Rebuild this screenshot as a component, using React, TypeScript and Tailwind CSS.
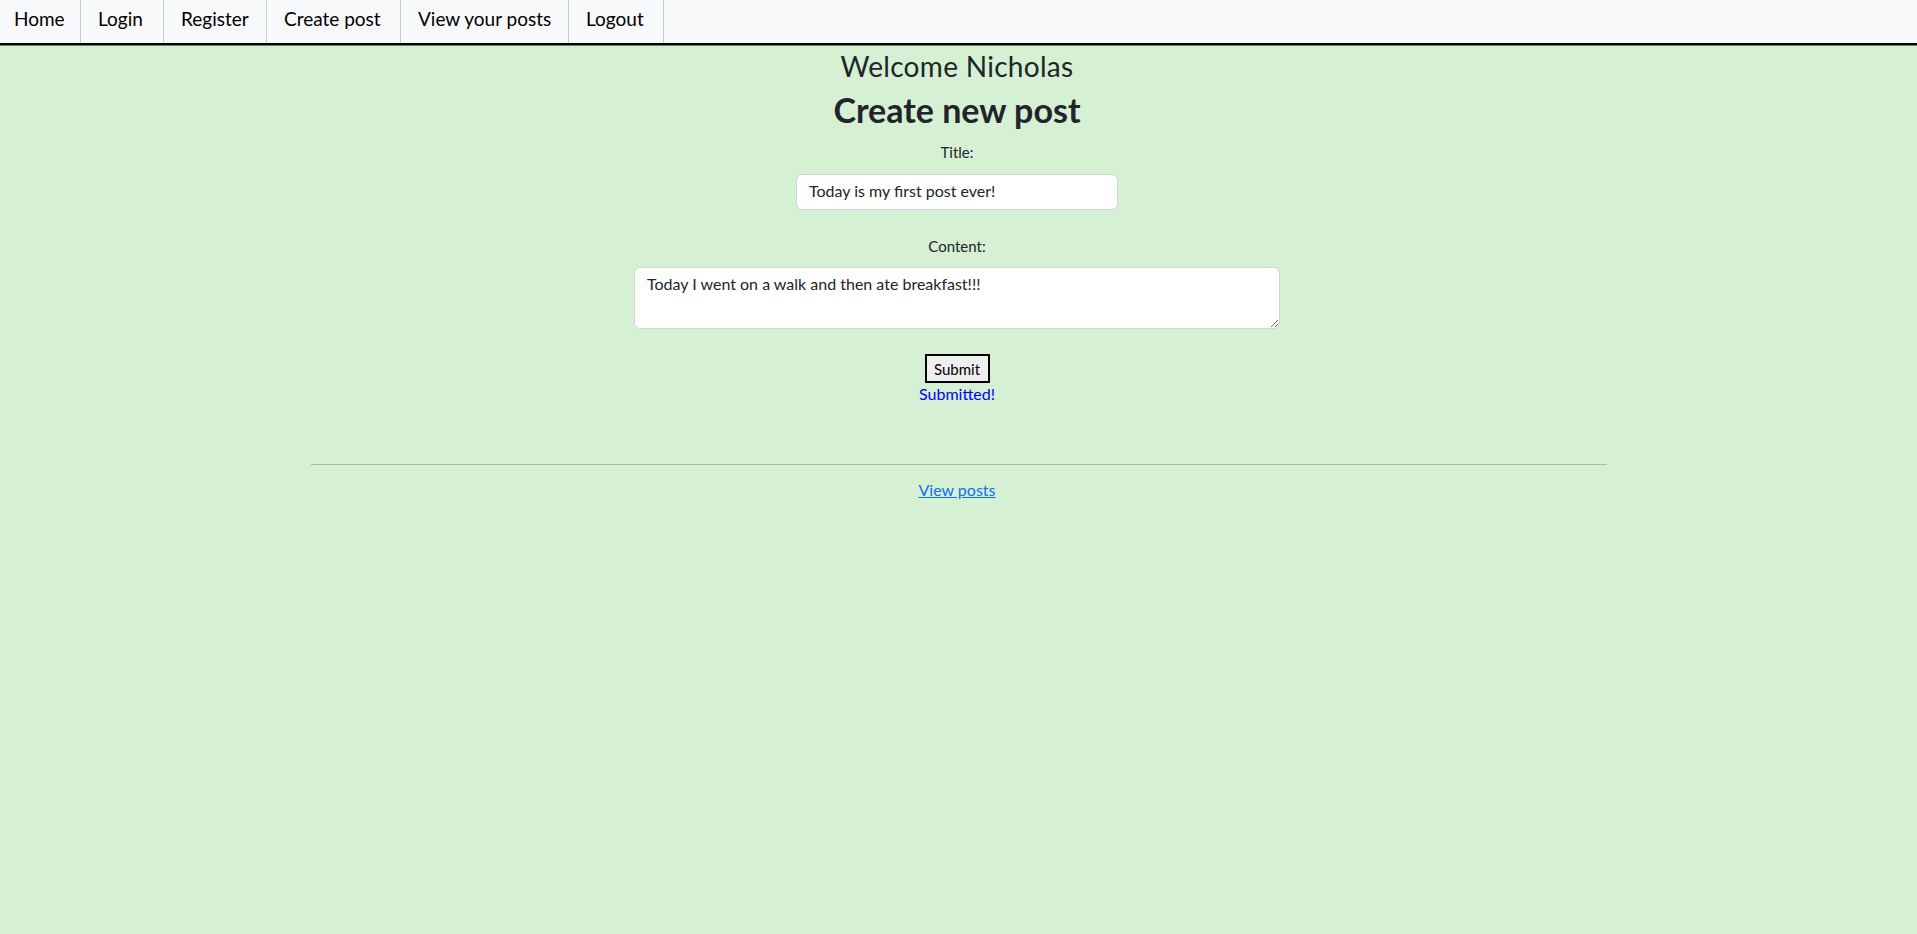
import React from "react";

const navItems: { label: string; w: string; pl: string }[] = [
  { label: "Home", w: "w-[81px]", pl: "pl-[14px]" },
  { label: "Login", w: "w-[83px]", pl: "pl-[17px]" },
  { label: "Register", w: "w-[103px]", pl: "pl-[17px]" },
  { label: "Create post", w: "w-[134px]", pl: "pl-[17px]" },
  { label: "View your posts", w: "w-[168px]", pl: "pl-[17px]" },
  { label: "Logout", w: "w-[95px]", pl: "pl-[17px]" },
];

export default function App() {
  return (
    <div
      className="min-h-[934px] w-full bg-[#d5f0d2] text-[#212529]"
      style={{ fontFamily: "Lato, 'Noto Sans', sans-serif" }}
    >
      <nav className="flex h-[45px] w-full border-b-2 border-black bg-[#f8f9fa] shadow-[0_1px_0_#6f806c]">
        {navItems.map((item) => (
          <a
            key={item.label}
            href="#"
            className={`${item.w} ${item.pl} block h-full border-r border-[#b9dab0] pt-[7px] text-[19px] leading-[23px] text-black no-underline`}
          >
            {item.label}
          </a>
        ))}
      </nav>

      <main className="flex flex-col items-center pr-[3px]">
        <h3 className="mt-[5px] text-[28px] leading-[32px] font-normal tracking-[0.3px]">Welcome Nicholas</h3>
        <h2 className="mt-[8px] text-[34px] leading-[40px] font-bold">Create new post</h2>

        <label className="mt-[12px] text-[15px] leading-[20px]">Title:</label>
        <input
          type="text"
          defaultValue="Today is my first post ever!"
          className="mt-[12px] box-border h-[36px] w-[322px] rounded-[6px] border border-[#ced4da] bg-white px-[12px] pb-[3px] text-[16px] text-[#212529] outline-none"
          style={{ fontFamily: "Lato, sans-serif" }}
        />

        <label className="mt-[26px] text-[15px] leading-[20px]">Content:</label>
        <textarea
          defaultValue="Today I went on a walk and then ate breakfast!!!"
          className="mt-[11px] box-border h-[62px] w-[646px] rounded-[6px] border border-[#ced4da] bg-white px-[12px] pt-[4px] text-[16px] leading-[24px] text-[#212529] outline-none"
          style={{ fontFamily: "Lato, sans-serif" }}
        />

        <button
          type="button"
          className="mt-[25px] box-border flex h-[29px] w-[65px] items-center justify-center border-2 border-black bg-[#efefef] text-[15px] leading-[20px] text-black"
        >
          Submit
        </button>
        <p className="mt-[1px] text-[16px] leading-[20px] text-[#0000ff]">Submitted!</p>
      </main>

      <div className="mx-auto mt-[60px] max-w-[1320px] px-3">
        <hr className="border-0 border-t border-[#a8bda8]" />
        <div className="flex justify-center pr-[3px]">
          <a href="#" className="mt-[15px] text-[16px] leading-[20px] text-[#0d6efd] underline">
            View posts
          </a>
        </div>
      </div>
    </div>
  );
}
